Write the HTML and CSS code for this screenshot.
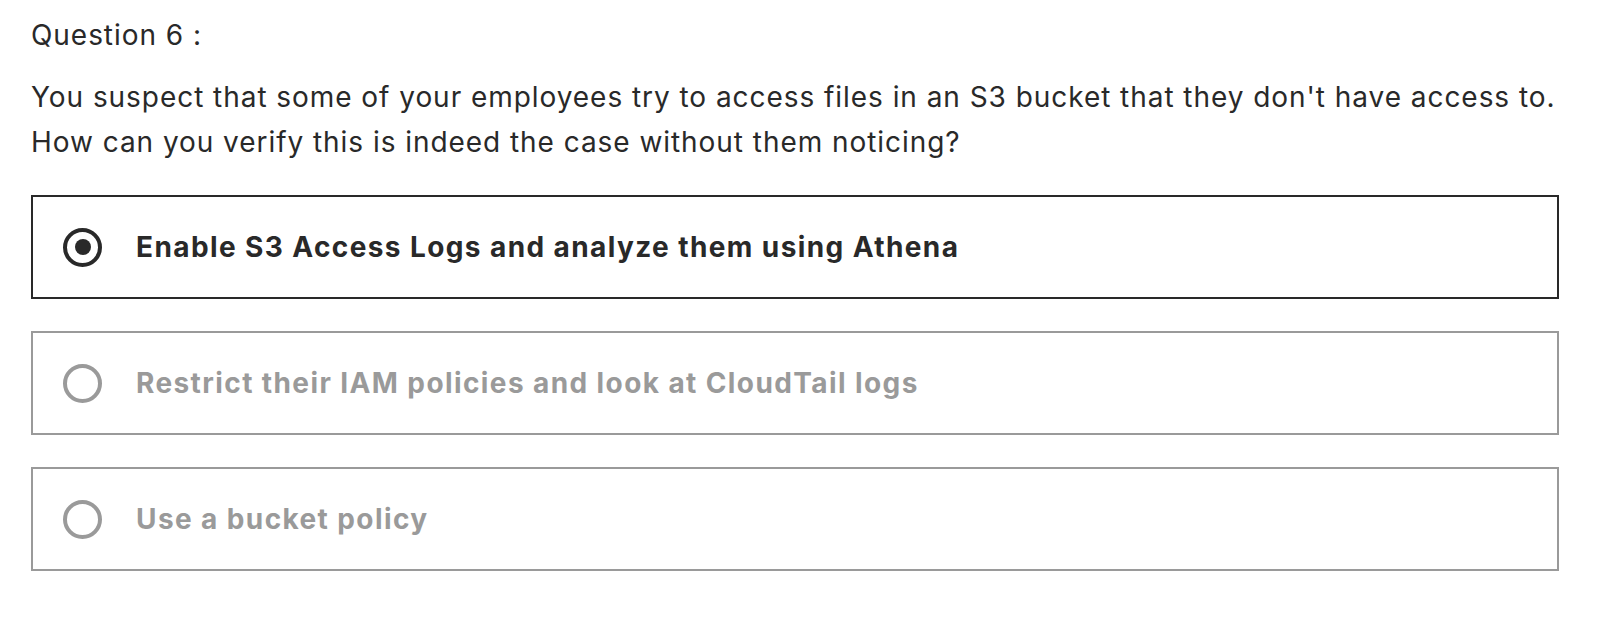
FILE: index.html
```html
<!DOCTYPE html>
<html lang="en">
<head>
<meta charset="utf-8">
<title>Question 6</title>
<link rel="stylesheet" href="styles.css">
</head>
<body>
<main class="quiz">
  <p class="q-label">Question 6 :</p>
  <p class="q-text">You suspect that some of your employees try to access files in an S3 bucket that they don't have access to. How can you verify this is indeed the case without them noticing?</p>
  <div class="options">
    <label class="option is-selected">
      <span class="radio"><span class="dot"></span></span>
      <span class="option-text">Enable S3 Access Logs and analyze them using Athena</span>
    </label>
    <label class="option">
      <span class="radio"></span>
      <span class="option-text">Restrict their IAM policies and look at CloudTail logs</span>
    </label>
    <label class="option">
      <span class="radio"></span>
      <span class="option-text">Use a bucket policy</span>
    </label>
  </div>
</main>
</body>
</html>
```
FILE: styles.css
```css
html, body {
  margin: 0;
  padding: 0;
  background: #ffffff;
}
body {
  font-family: Inter, "Liberation Sans", sans-serif;
  color: #292929;
}
.quiz {
  width: 1528px;
  padding: 13px 0 0 31px;
}
.q-label {
  margin: 0;
  font-size: 28px;
  line-height: 45px;
  letter-spacing: 0.95px;
}
.q-text {
  margin: 17px 0 0;
  font-size: 28px;
  line-height: 45px;
  letter-spacing: 0.95px;
  max-width: 1525px;
}
.options {
  margin-top: 30px;
  display: flex;
  flex-direction: column;
  gap: 32px;
}
.option {
  box-sizing: border-box;
  height: 104px;
  border: 2px solid #9a9a9a;
  display: flex;
  align-items: center;
  padding-left: 30px;
  gap: 34px;
  color: #9a9a9a;
}
.option.is-selected {
  border-color: #292929;
  color: #292929;
}
.radio {
  box-sizing: border-box;
  width: 39px;
  height: 39px;
  border: 4px solid currentColor;
  border-radius: 50%;
  display: flex;
  align-items: center;
  justify-content: center;
  flex: none;
}
.dot {
  width: 16px;
  height: 16px;
  border-radius: 50%;
  background: currentColor;
}
.option-text {
  font-size: 28px;
  font-weight: 700;
  line-height: 36px;
  letter-spacing: 1.4px;
}
```
